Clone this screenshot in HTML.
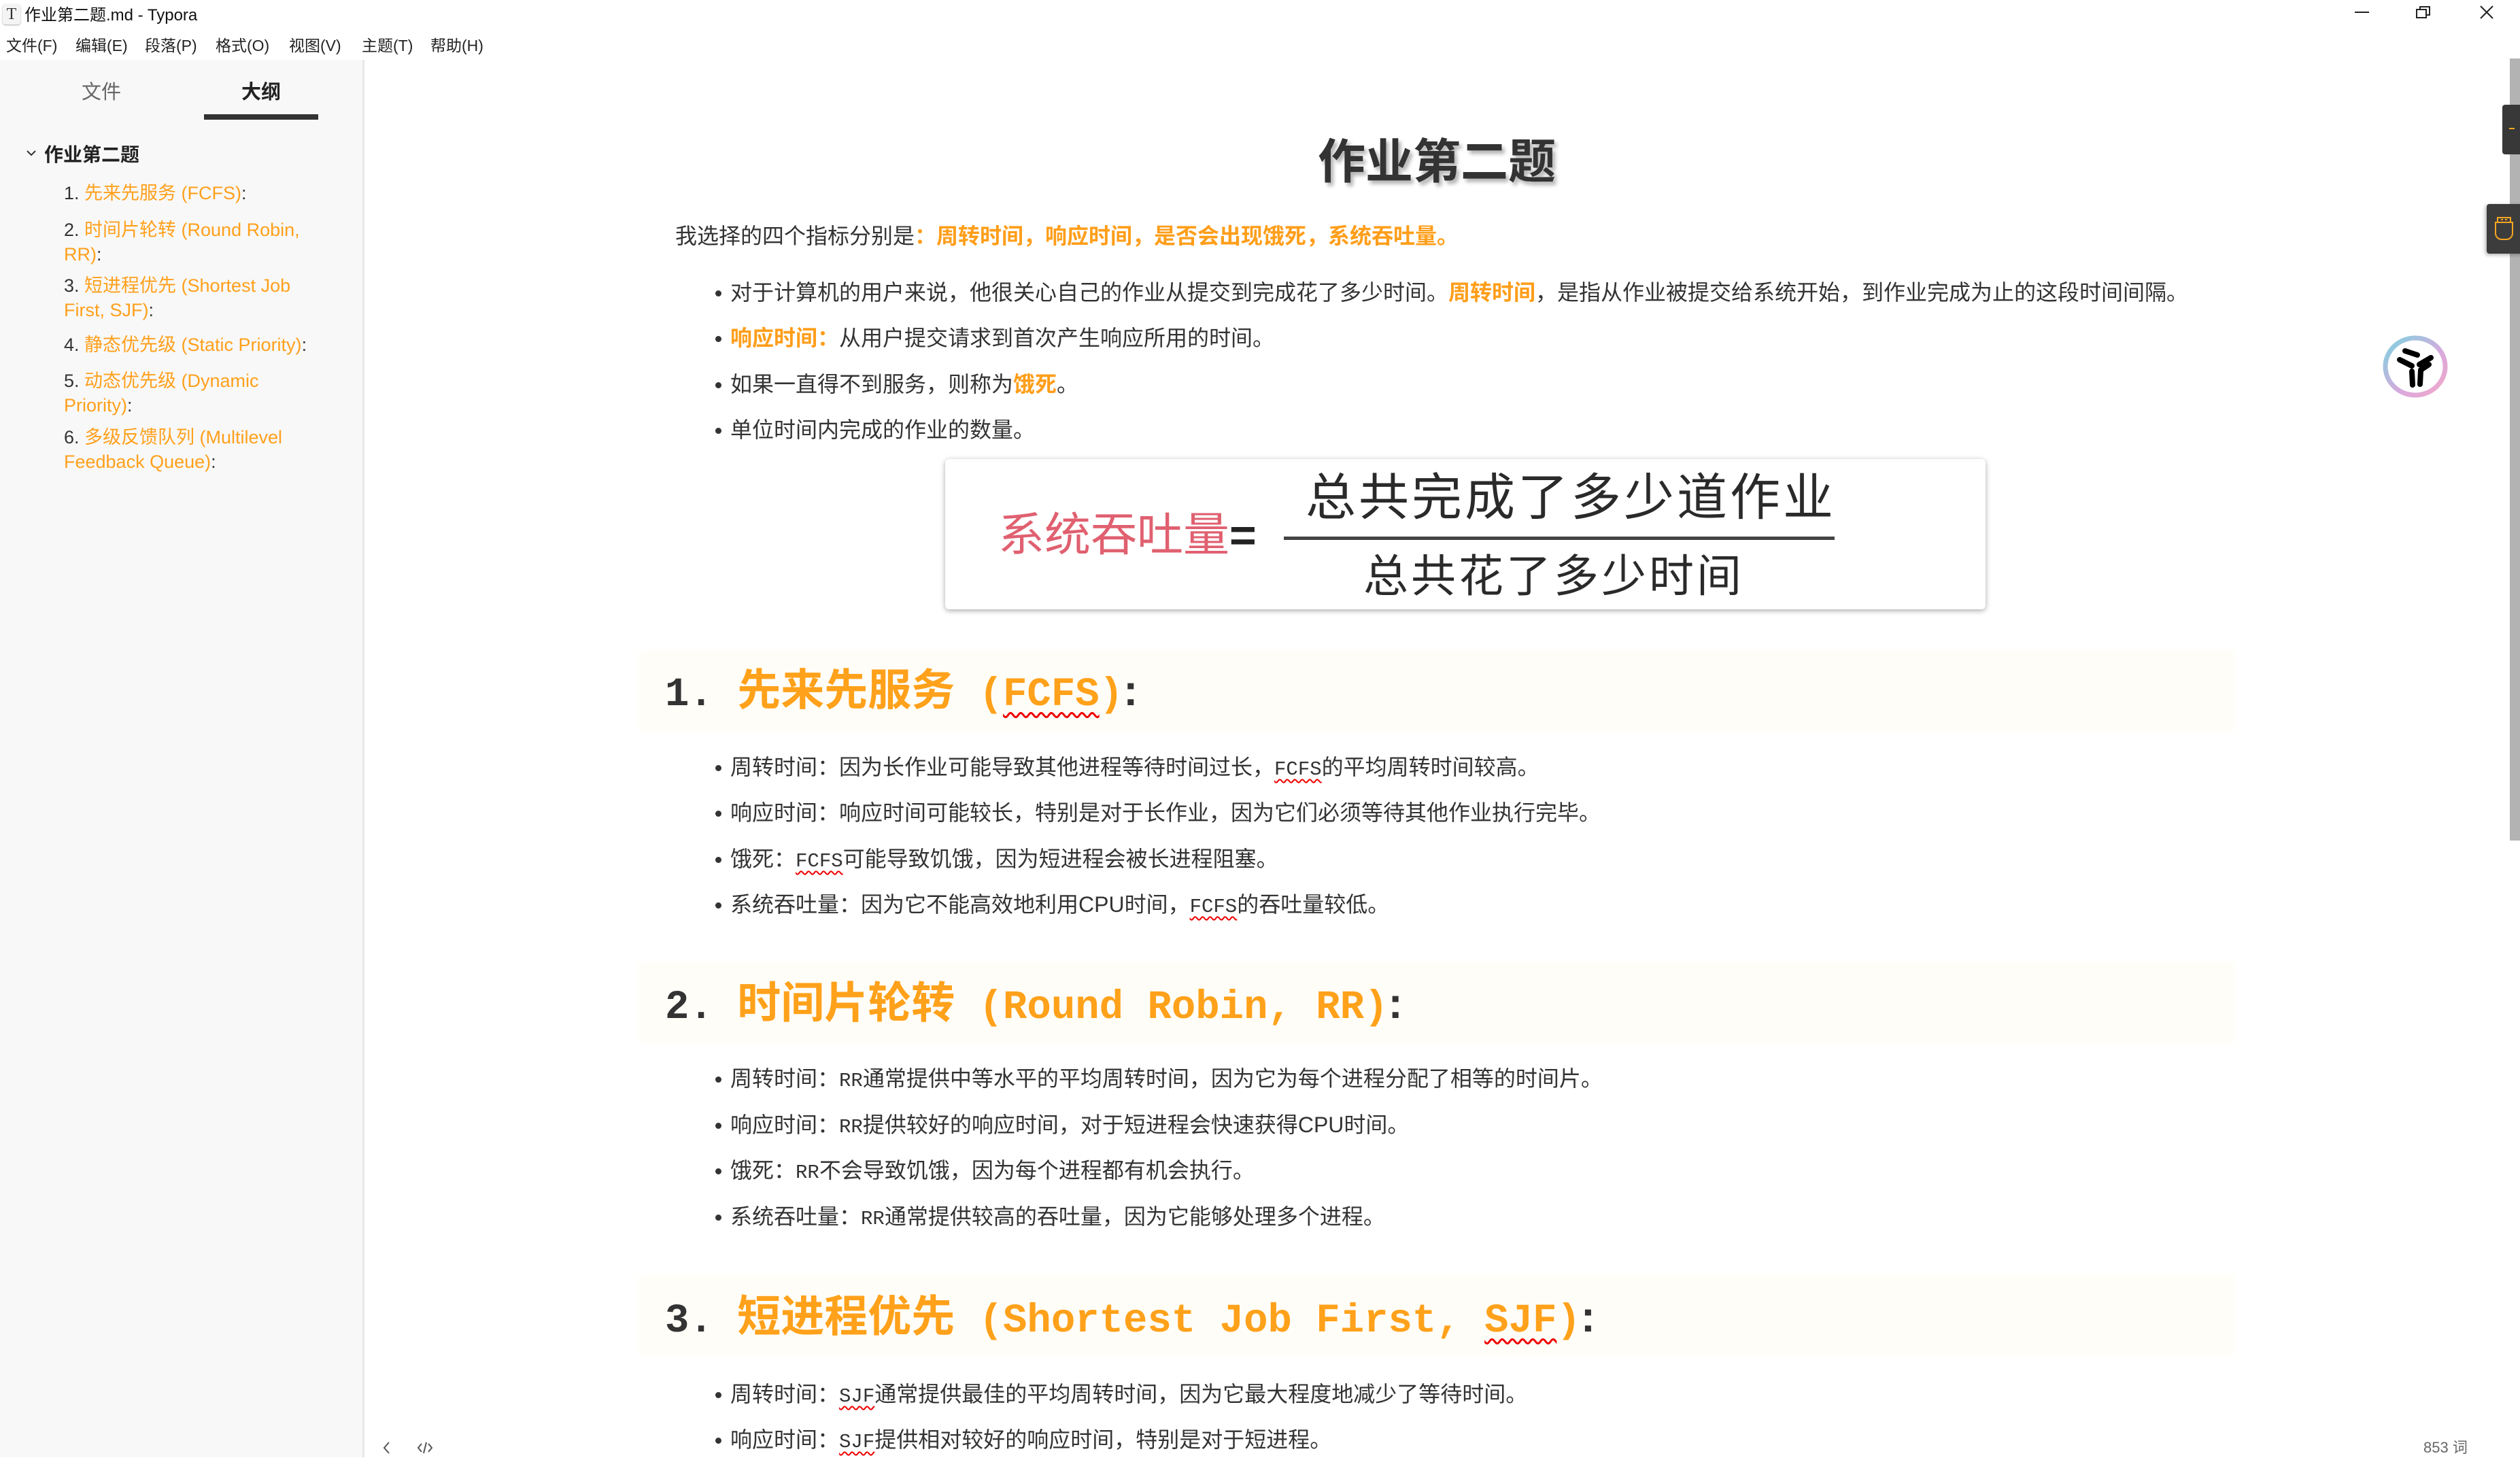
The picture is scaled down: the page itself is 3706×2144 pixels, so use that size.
<!DOCTYPE html>
<html><head><meta charset="utf-8">
<style>
*{margin:0;padding:0;box-sizing:border-box}
body{width:3706px;height:2143px;overflow:hidden;background:#fff;position:relative;font-family:"Liberation Sans","Noto Sans CJK SC",sans-serif;color:#333}
.a{position:absolute;white-space:nowrap}
.menu span{position:absolute;top:50px;font-size:23px;line-height:34px;color:#222}
#side{position:absolute;left:0;top:88px;width:536px;height:2055px;background:#f8f8f8;border-right:3px solid #e8e8e8}
.ol{position:absolute;left:94px;font-size:27px;line-height:36px;color:#ffa01c;white-space:nowrap}
.ol i{font-style:normal;color:#333}
.c{font-size:32px;line-height:44px;color:#333}
.b{color:#ff9e1a;font-weight:bold}
.li{position:absolute;left:1045px;font-size:32px;line-height:44px;white-space:nowrap;color:#333}
.li:before{content:"";position:absolute;left:7px;top:19px;width:9px;height:9px;border-radius:50%;background:#333}
.li span.t{margin-left:29px}
.m{font-family:"Liberation Mono",monospace;font-size:29px;text-decoration:underline wavy #e00;text-underline-offset:6px;text-decoration-thickness:2px}
.m2{font-family:"Liberation Mono",monospace;font-size:29px}
.h2{position:absolute;left:946px;width:2334px;height:108px;background:#fffdf7;box-shadow:0 0 8px 6px #fffdf7}
.h2t{position:absolute;left:978px;font-size:64px;line-height:80px;font-weight:bold;white-space:pre;color:#333}
.h2t .o{color:#ffa11a}
.h2t .mo{font-family:"Liberation Mono",monospace;font-size:59px;font-weight:bold}
.h2t .w{text-decoration:underline wavy #e00;text-underline-offset:10px;text-decoration-thickness:3px}
</style></head><body>
<div class="a" style="left:4px;top:6px;width:26px;height:30px;border-radius:4px;background:#f4f4f4;box-shadow:0 1px 2px #aaa;font-family:'Liberation Serif',serif;font-size:24px;line-height:30px;text-align:center;color:#333">T</div>
<div class="a" style="left:36px;top:6px;font-size:24px;line-height:34px;color:#111">作业第二题.md - Typora</div>
<div class="a" style="left:3463px;top:17px;width:21px;height:2px;background:#222"></div>
<svg class="a" style="left:3553px;top:8px" width="22" height="20"><rect x="1" y="6" width="14" height="12" fill="none" stroke="#222" stroke-width="2"/><path d="M6 6V2h14v12h-5" fill="none" stroke="#222" stroke-width="2"/></svg>
<svg class="a" style="left:3646px;top:7px" width="22" height="22"><path d="M2 2L20 20M20 2L2 20" stroke="#222" stroke-width="2"/></svg>
<div class="menu"><span style="left:9px">文件(F)</span><span style="left:111px">编辑(E)</span><span style="left:213px">段落(P)</span><span style="left:317px">格式(O)</span><span style="left:425px">视图(V)</span><span style="left:532px">主题(T)</span><span style="left:633px">帮助(H)</span></div>
<div id="side"></div>
<div class="a" style="left:120px;top:116px;font-size:29px;line-height:40px;color:#666">文件</div>
<div class="a" style="left:355px;top:116px;font-size:29px;line-height:40px;font-weight:bold;color:#222">大纲</div>
<div class="a" style="left:300px;top:168px;width:168px;height:8px;background:#333"></div>
<svg class="a" style="left:38px;top:220px" width="16" height="12"><path d="M2 2l6 6 6-6" fill="none" stroke="#333" stroke-width="2"/></svg>
<div class="a" style="left:65px;top:208px;font-size:28px;line-height:40px;font-weight:bold;color:#222">作业第二题</div>
<div class="ol" style="top:266px"><i>1. </i>先来先服务 (FCFS)<i>:</i></div>
<div class="ol" style="top:320px"><i>2. </i>时间片轮转 (Round Robin,<br>RR)<i>:</i></div>
<div class="ol" style="top:402px"><i>3. </i>短进程优先 (Shortest Job<br>First, SJF)<i>:</i></div>
<div class="ol" style="top:489px"><i>4. </i>静态优先级 (Static Priority)<i>:</i></div>
<div class="ol" style="top:542px"><i>5. </i>动态优先级 (Dynamic<br>Priority)<i>:</i></div>
<div class="ol" style="top:625px"><i>6. </i>多级反馈队列 (Multilevel<br>Feedback Queue)<i>:</i></div>
<div class="a" style="left:1938px;top:196px;font-size:70px;line-height:84px;font-weight:bold;color:#333;text-shadow:4px 5px 6px rgba(0,0,0,.3)">作业第二题</div>
<div class="a c" style="left:993px;top:325px">我选择的四个指标分别是<span class="b">：周转时间，响应时间，是否会出现饿死，系统吞吐量。</span></div>
<div class="li" style="top:408px"><span class="t">对于计算机的用户来说，他很关心自己的作业从提交到完成花了多少时间。<span class="b">周转时间</span>，是指从作业被提交给系统开始，到作业完成为止的这段时间间隔。</span></div>
<div class="li" style="top:475px"><span class="t"><span class="b">响应时间：</span>从用户提交请求到首次产生响应所用的时间。</span></div>
<div class="li" style="top:543px"><span class="t">如果一直得不到服务，则称为<span class="b">饿死</span>。</span></div>
<div class="li" style="top:610px"><span class="t">单位时间内完成的作业的数量。</span></div>
<div class="a" style="left:1390px;top:675px;width:1530px;height:221px;background:#fff;border-radius:6px;box-shadow:0 2px 8px rgba(0,0,0,.35)"></div>
<div class="a" style="left:1468px;top:745px;font-size:68px;line-height:84px;color:#e06070">系统吞吐量<span style="color:#222;font-weight:bold">=</span></div>
<div class="a" style="left:1920px;top:690px;font-size:74px;line-height:84px;color:#2a2a2a;letter-spacing:4px">总共完成了多少道作业</div>
<div class="a" style="left:1888px;top:789px;width:810px;height:5px;background:#444"></div>
<div class="a" style="left:2005px;top:805px;font-size:66px;line-height:84px;color:#2a2a2a;letter-spacing:4px">总共花了多少时间</div>
<div class="h2" style="top:962px"></div>
<div class="h2t" style="top:975px"><span class="mo">1. </span><span class="o">先来先服务<span class="mo"> (<span class="w">FCFS</span>)</span></span>:</div>
<div class="li" style="top:1106px"><span class="t">周转时间：因为长作业可能导致其他进程等待时间过长，<span class="m">FCFS</span>的平均周转时间较高。</span></div>
<div class="li" style="top:1173px"><span class="t">响应时间：响应时间可能较长，特别是对于长作业，因为它们必须等待其他作业执行完毕。</span></div>
<div class="li" style="top:1241px"><span class="t">饿死：<span class="m">FCFS</span>可能导致饥饿，因为短进程会被长进程阻塞。</span></div>
<div class="li" style="top:1308px"><span class="t">系统吞吐量：因为它不能高效地利用CPU时间，<span class="m">FCFS</span>的吞吐量较低。</span></div>
<div class="h2" style="top:1420px"></div>
<div class="h2t" style="top:1435px"><span class="mo">2. </span><span class="o">时间片轮转<span class="mo"> (Round Robin, RR)</span></span>:</div>
<div class="li" style="top:1564px"><span class="t">周转时间：<span class="m2">RR</span>通常提供中等水平的平均周转时间，因为它为每个进程分配了相等的时间片。</span></div>
<div class="li" style="top:1632px"><span class="t">响应时间：<span class="m2">RR</span>提供较好的响应时间，对于短进程会快速获得CPU时间。</span></div>
<div class="li" style="top:1699px"><span class="t">饿死：<span class="m2">RR</span>不会导致饥饿，因为每个进程都有机会执行。</span></div>
<div class="li" style="top:1767px"><span class="t">系统吞吐量：<span class="m2">RR</span>通常提供较高的吞吐量，因为它能够处理多个进程。</span></div>
<div class="h2" style="top:1880px"></div>
<div class="h2t" style="top:1896px"><span class="mo">3. </span><span class="o">短进程优先<span class="mo"> (Shortest Job First, <span class="w">SJF</span>)</span></span>:</div>
<div class="li" style="top:2028px"><span class="t">周转时间：<span class="m">SJF</span>通常提供最佳的平均周转时间，因为它最大程度地减少了等待时间。</span></div>
<div class="li" style="top:2095px"><span class="t">响应时间：<span class="m">SJF</span>提供相对较好的响应时间，特别是对于短进程。</span></div>
<svg class="a" style="left:558px;top:2118px" width="80" height="22"><path d="M14 3l-7 8 7 8" fill="none" stroke="#555" stroke-width="2"/><path d="M62 5l-5 6 5 6M72 5l5 6-5 6M69 3l-4 16" fill="none" stroke="#555" stroke-width="2"/></svg>
<div class="a" style="left:3564px;top:2114px;font-size:22px;line-height:30px;color:#666">853 词</div>
<div class="a" style="left:3691px;top:86px;width:15px;height:1150px;background:#b3b3b3"></div>
<div class="a" style="left:3680px;top:154px;width:30px;height:73px;background:#383838;border-radius:4px"></div>
<div class="a" style="left:3690px;top:188px;width:8px;height:2px;background:#f5a623"></div>
<div class="a" style="left:3657px;top:300px;width:55px;height:73px;background:#3c3c3c;border-radius:4px;box-shadow:-2px 2px 6px rgba(0,0,0,.3)"></div>
<svg class="a" style="left:3668px;top:318px" width="30" height="38"><rect x="5" y="2" width="19" height="7" fill="none" stroke="#f5a623" stroke-width="2"/><path d="M2 9h25v16a9 9 0 0 1-9 9h-7a9 9 0 0 1-9-9z" fill="none" stroke="#f5a623" stroke-width="2"/><rect x="10" y="4" width="3" height="2" fill="#f5a623"/><rect x="16" y="4" width="3" height="2" fill="#f5a623"/></svg>
<svg class="a" style="left:3503px;top:492px" width="98" height="94"><defs><linearGradient id="g" x1="0" y1="0" x2="1" y2="1"><stop offset="0" stop-color="#7dd3e0"/><stop offset="0.6" stop-color="#d9a9dd"/><stop offset="1" stop-color="#f2a7c8"/></linearGradient></defs><ellipse cx="49" cy="47" rx="44" ry="42" fill="#fff" stroke="url(#g)" stroke-width="7"/><path d="M26 37l18 9M72 34l-17 10M52 30l-18-6M44 54l1 20M57 53l-1 20M69 44l-12 8" stroke="#000" stroke-width="8" stroke-linecap="round"/></svg>
</body></html>
